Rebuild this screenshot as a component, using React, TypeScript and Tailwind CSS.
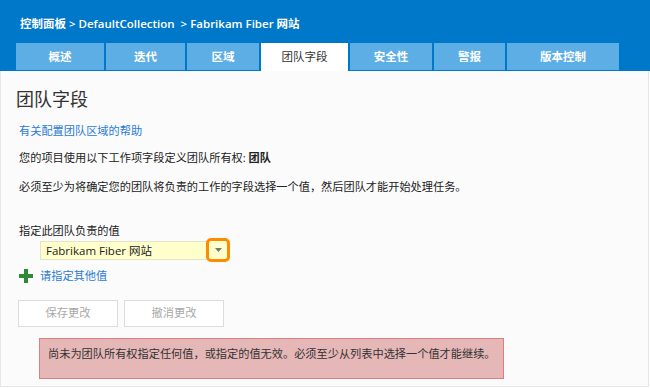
import React from 'react'

const tabs = [
  { label: '概述', w: 'w-[88px]' },
  { label: '迭代', w: 'w-[79px]' },
  { label: '区域', w: 'w-[72px]' },
  { label: '团队字段', w: 'w-[87px]', active: true },
  { label: '安全性', w: 'w-[82px]' },
  { label: '警报', w: 'w-[71px]' },
  { label: '版本控制', w: 'w-[112px]' },
]

const font = { fontFamily: '"Segoe UI", "Open Sans", "Noto Sans CJK SC", sans-serif' }

export default function App() {
  return (
    <div className="w-[650px] h-[388px] bg-white overflow-hidden text-[11.2px] text-[#222]" style={font}>
      {/* Header */}
      <div className="h-[71px] bg-[#0078c9] flex flex-col">
        <div className="h-[43px] pl-[20px] pt-[15px] text-white font-semibold text-[11.5px] leading-[18px] whitespace-pre">
          控制面板 &gt; DefaultCollection  &gt; Fabrikam Fiber 网站
        </div>
        <div className="flex items-start gap-[2px] pl-[16px] h-[28px]">
          {tabs.map((t) =>
            t.active ? (
              <div
                key={t.label}
                className={`${t.w} h-[28px] bg-white text-[#333] flex items-center justify-center pb-[1px] text-[11.5px]`}
              >
                {t.label}
              </div>
            ) : (
              <div
                key={t.label}
                className={`${t.w} h-[27px] bg-[#5daee4] text-white font-semibold flex items-center justify-center text-[11.5px]`}
              >
                {t.label}
              </div>
            )
          )}
        </div>
      </div>

      {/* Content */}
      <div className="w-[649px] h-[316px] bg-[#fbfbfb] border-l border-r border-b border-[#e6e6e6] pl-[15px] pt-[14px]">
        <h1 className="text-[18px] leading-[28px] text-[#333] font-normal">团队字段</h1>
        <div className="mt-[9px] ml-[3px] text-[#2a7ad8] leading-[18px]">有关配置团队区域的帮助</div>
        <div className="mt-[9px] ml-[3px] leading-[18px]">
          您的项目使用以下工作项字段定义团队所有权: <span className="font-semibold">团队</span>
        </div>
        <div className="mt-[11px] ml-[3px] leading-[18px]">
          必须至少为将确定您的团队将负责的工作的字段选择一个值，然后团队才能开始处理任务。
        </div>
        <div className="mt-[26px] ml-[3px] leading-[18px]">指定此团队负责的值</div>

        {/* Combo */}
        <div className="ml-[24px] mt-[-2px] flex items-center">
          <div className="w-[166px] h-[19px] bg-[#ffffcc] border-t border-b border-l border-[#e3e3c8] pl-[5px] text-[11.5px] leading-[17px] text-[#222]">
            Fabrikam Fiber 网站
          </div>
          <div className="w-[24px] h-[24px] rounded-[5px] border-[3px] border-[#ff8c00] bg-[#ffffcc] flex items-center justify-center">
            <svg width="7" height="4" viewBox="0 0 7 4">
              <path d="M0 0 L7 0 L3.5 4 Z" fill="#777" />
            </svg>
          </div>
        </div>

        {/* Add another */}
        <div className="mt-[5px] ml-[3px] flex items-center gap-[7px]">
          <svg width="14" height="14" viewBox="0 0 14 14">
            <path d="M5 0 H9 V5 H14 V9 H9 V14 H5 V9 H0 V5 H5 Z" fill="#2e8b35" />
          </svg>
          <span className="text-[#2a7ad8] leading-[18px]">请指定其他值</span>
        </div>

        {/* Buttons */}
        <div className="mt-[15px] ml-[2px] flex gap-[6px]">
          <div className="w-[100px] h-[27px] bg-white border border-[#dcdcdc] text-[#a8a8a8] flex items-center justify-center">
            保存更改
          </div>
          <div className="w-[100px] h-[27px] bg-white border border-[#dcdcdc] text-[#a8a8a8] flex items-center justify-center">
            撤消更改
          </div>
        </div>

        {/* Error */}
        <div className="mt-[11px] ml-[23px] w-[465px] h-[41px] bg-[#e6b7b7] border border-[#dd7f7f] pl-[8px] pt-[6px] leading-[18px] text-[#333] whitespace-nowrap">
          尚未为团队所有权指定任何值，或指定的值无效。必须至少从列表中选择一个值才能继续。
        </div>
      </div>
    </div>
  )
}
